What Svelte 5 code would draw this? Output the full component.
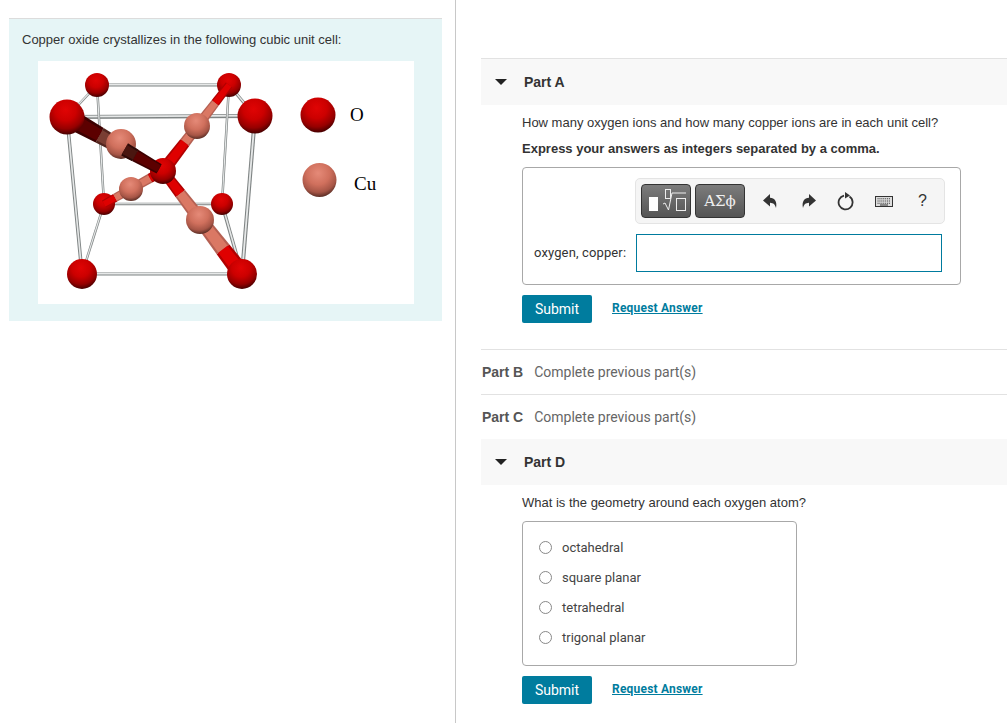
<script>
  const radioOptions = ['octahedral', 'square planar', 'tetrahedral', 'trigonal planar'];
  const struts = [
    [97,85,229,85,3],[67,117,255,116,4],[104,204,222,204,2.5],[82,274,242,274,3],
    [97,85,104,204,2.5],[229,85,222,204,2.5],[67,117,82,274,3.5],[255,116,242,274,4],
    [97,85,67,117,2.5],[229,85,255,116,3],[104,204,82,274,2.5],[222,204,242,274,3.5]
  ];

  // Part of a tapered bond between two atoms, from fraction a to fraction b, scaled across by k.
  function seg(bond, a, b, k = 1) {
    const [x1, y1, w1, x2, y2, w2] = bond;
    const dx = x2 - x1, dy = y2 - y1, len = Math.hypot(dx, dy);
    const nx = -dy / len, ny = dx / len;
    const at = (t, s) => {
      const w = (w1 + (w2 - w1) * t) * k / 2;
      return (x1 + dx * t + nx * w * s).toFixed(1) + ',' + (y1 + dy * t + ny * w * s).toFixed(1);
    };
    return [at(a, 1), at(b, 1), at(b, -1), at(a, -1)].join(' ');
  }
  const upperRight = [229,85,8, 163,171,13];
  const lowerLeft = [104,204,8, 163,171,10];
  const frontLeft = [67,117,20, 163,171,10];
  const lowerRight = [163,171,10, 242,274,18];
  const bright = { edge: '#b00000', core: '#df0000' };
  const copper = { edge: '#b56052', core: '#da7864' };
  const darkRed = { edge: '#3c0000', core: '#5c0000' };
  const darkCu = { edge: '#52251e', core: '#7a3e33' };
  const darkMix = { edge: '#2e0a08', core: '#4a1610' };
  const layerOne = [
    [upperRight, 0, .21, bright], [upperRight, .21, .67, copper], [upperRight, .67, 1, bright],
    [lowerLeft, 0, .19, bright], [lowerLeft, .19, .78, copper], [lowerLeft, .78, 1, bright]
  ];
  const layerDark = [
    [frontLeft, 0, .34, darkRed], [frontLeft, .34, .6, darkCu], [frontLeft, .6, .71, darkMix], [frontLeft, .71, .96, darkRed]
  ];
  const layerFront = [
    [lowerRight, 0, .22, bright], [lowerRight, .22, .76, copper], [lowerRight, .76, 1, bright]
  ];
</script>

{#snippet bonds(list)}
  {#each list as [bond, a, b, c]}
    <polygon points={seg(bond, a, b)} fill={c.edge}/>
    <polygon points={seg(bond, a, b, .72)} fill={c.core}/>
  {/each}
{/snippet}

<div class="page">
  <aside class="left">
    <div class="intro">
      <p>Copper oxide crystallizes in the following cubic unit cell:</p>
      <div class="figure">
        <svg width="376" height="243" viewBox="38 61 376 243">
          <defs>
            <radialGradient id="red" cx="46%" cy="30%" r="75%">
              <stop offset="0" stop-color="#e00404"/><stop offset=".4" stop-color="#cc0000"/><stop offset=".72" stop-color="#960000"/><stop offset="1" stop-color="#2e0000"/>
            </radialGradient>
            <radialGradient id="cu" cx="46%" cy="30%" r="75%">
              <stop offset="0" stop-color="#e58a78"/><stop offset=".45" stop-color="#d0705d"/><stop offset=".75" stop-color="#a65546"/><stop offset="1" stop-color="#40201a"/>
            </radialGradient>
          </defs>
          {#each struts as s}
            <line x1={s[0]} y1={s[1]} x2={s[2]} y2={s[3]} stroke="#7f8484" stroke-width={s[4]}/>
            <line x1={s[0]} y1={s[1] - s[4] * 0.1} x2={s[2]} y2={s[3] - s[4] * 0.1} stroke="#e6e8e8" stroke-width={s[4] * 0.45}/>
          {/each}

          <circle cx="104" cy="204" r="11" fill="url(#red)"/>
          <circle cx="222" cy="204" r="11" fill="url(#red)"/>
          <circle cx="97" cy="85" r="12" fill="url(#red)"/>
          <circle cx="229" cy="85" r="12" fill="url(#red)"/>
          {@render bonds(layerOne)}
          <circle cx="197" cy="126" r="13" fill="url(#cu)"/>
          <circle cx="131" cy="189" r="12" fill="url(#cu)"/>
          {@render bonds(layerFront)}
          <circle cx="163" cy="171" r="13" fill="url(#red)"/>
          {@render bonds(layerDark)}
          <circle cx="121" cy="144" r="15" fill="url(#cu)"/>
          <polygon points={seg(frontLeft, .6, .71)} fill="#2e0a08"/>
          <polygon points={seg(frontLeft, .6, .71, .72)} fill="#4a1610"/>
          <circle cx="200" cy="220" r="14" fill="url(#cu)"/>
          <circle cx="67" cy="117" r="17.5" fill="url(#red)"/>
          <circle cx="255" cy="116" r="17.5" fill="url(#red)"/>
          <circle cx="82" cy="274" r="15" fill="url(#red)"/>
          <circle cx="242" cy="274" r="15" fill="url(#red)"/>
          <circle cx="318" cy="115" r="17.5" fill="url(#red)"/>
          <circle cx="319.500" cy="180" r="17" fill="url(#cu)"/>
          <text x="350" y="121" class="sym">O</text>
          <text x="354" y="190" class="sym">Cu</text>
        </svg>
      </div>
    </div>
  </aside>

  <main class="right">
    <section class="part">
      <header class="part-head">
        <svg class="caret" width="12" height="6" viewBox="0 0 12 6"><path d="M0 0H12L6 6Z"/></svg>
        <span>Part A</span>
      </header>
      <div class="part-body">
        <p class="q">How many oxygen ions and how many copper ions are in each unit cell?</p>
        <p class="q strong">Express your answers as integers separated by a comma.</p>
        <div class="answer">
          <div class="toolbar">
            <button class="tool-dark templates" aria-label="Templates">
              <svg width="46" height="28" viewBox="0 0 46 28">
                <rect x="6" y="10" width="9" height="14" fill="#fff"/>
                <rect x="22.500" y="2.500" width="5" height="9" fill="none" stroke="#eee" stroke-width="1"/>
                <path d="M20 17l2 -1l3.500 7l3.500 -17h14" fill="none" stroke="#eee" stroke-width="1"/>
                <rect x="33.500" y="11.500" width="9" height="12" fill="none" stroke="#eee" stroke-width="1"/>
              </svg>
            </button>
            <button class="tool-dark symbols">ΑΣϕ</button>
            <svg class="ic undo" width="16" height="16" viewBox="0 0 16 16"><path d="M1 7.500L8 1V4.800C12.500 5 15.500 8.500 14 15C13 11.500 11.500 10 8 9.800V13.500Z"/></svg>
            <svg class="ic redo" width="16" height="16" viewBox="0 0 16 16"><path d="M15 7.500L8 1V4.800C3.500 5 .5 8.500 2 15C3 11.500 4.500 10 8 9.800V13.500Z"/></svg>
            <svg class="ic reset" width="18" height="20" viewBox="0 0 18 20"><path d="M7 4.600A7 7 0 1 0 12.500 5.600" fill="none" stroke="#333" stroke-width="1.800"/><path d="M8 1L13 4.600L8 7.500Z" fill="#333"/></svg>
            <svg class="ic kbd" width="18" height="11" viewBox="0 0 18 11"><rect x=".5" y=".5" width="17" height="10" fill="#ddd" stroke="#333"/><path d="M2.500 2.800h13M2.500 5h13M2.500 7.200h13" stroke="#444" stroke-width="1.100" stroke-dasharray="1.100 .8"/><path d="M5 9h8" stroke="#333"/></svg>
            <span class="help">?</span>
          </div>
          <div class="input-row">
            <label for="ans">oxygen, copper:</label>
            <input id="ans" type="text" />
          </div>
        </div>
        <div class="actions">
          <button class="submit">Submit</button>
          <span class="request">Request Answer</span>
        </div>
      </div>
    </section>

    <div class="locked first"><b>Part B</b><span>Complete previous part(s)</span></div>
    <div class="locked"><b>Part C</b><span>Complete previous part(s)</span></div>

    <section class="part d">
      <header class="part-head">
        <svg class="caret" width="12" height="6" viewBox="0 0 12 6"><path d="M0 0H12L6 6Z"/></svg>
        <span>Part D</span>
      </header>
      <div class="part-body">
        <p class="q">What is the geometry around each oxygen atom?</p>
        <div class="options">
          {#each radioOptions as o}
            <div class="opt"><span class="radio"></span><span>{o}</span></div>
          {/each}
        </div>
        <div class="actions second">
          <button class="submit">Submit</button>
          <span class="request">Request Answer</span>
        </div>
      </div>
    </section>
  </main>
</div>

<style>
  :global(body) { margin: 0; background: #fff; }
  .page { display: flex; width: 1007px; height: 723px; overflow: hidden; font-family: "Liberation Sans", Arial, sans-serif; color: #333; font-size: 13px; }
  p { margin: 0; }
  .left { width: 456px; box-sizing: border-box; border-right: 1px solid #c8c8c8; padding: 18px 13px 0 9px; flex: none; }
  .intro { background: #e6f5f6; border-top: 1px solid #dcdcdc; height: 302px; }
  .intro p { padding: 14px 0 0 13px; line-height: 14px; }
  .figure { margin: 14px 0 0 29px; width: 376px; height: 243px; background: #fff; }
  .figure svg { display: block; }
  .sym { font-family: "Liberation Serif", serif; font-size: 19px; fill: #000; }

  .right { flex: 1; min-width: 0; padding: 58px 0 0 25px; }
  .part-head { display: flex; align-items: center; height: 46px; background: #f8f8f8; border-top: 1px solid #e2e2e2; font-weight: 700; font-size: 14px; color: #333; }
  .caret { margin: 0 0 0 14px; fill: #222; }
  .part-head span { margin-left: 17px; }
  .part.d .part-head { border-top: 0; height: 46px; }
  .part-body { padding: 0 0 0 41px; }
  .q { font-size: 13px; line-height: 16px; padding-top: 10px; color: #333; }
  .q.strong { font-weight: 700; }
  .answer { margin-top: 10px; width: 437px; height: 116px; border: 1px solid #a8a8a8; border-radius: 4px; position: relative; }
  .toolbar { display: flex; align-items: center; box-sizing: border-box; position: absolute; left: 112px; top: 10px; width: 310px; height: 46px; padding-left: 5px; background: #f5f5f5; border: 1px solid #e4e4e4; border-radius: 5px; }
  .tool-dark { height: 34px; padding: 0; border: 1px solid #333; border-radius: 4px; background: linear-gradient(#7c7c7c, #555); color: #eee; display: flex; align-items: center; justify-content: center; }
  .templates { width: 50px; }
  .symbols { width: 50px; margin-left: 4px; font-family: "DejaVu Serif", "Liberation Serif", serif; font-size: 15px; }
  .ic { flex: none; fill: #333; }
  .undo { margin-left: 17px; }
  .redo { margin-left: 23px; }
  .reset { margin-left: 20px; }
  .kbd { margin-left: 20px; }
  .help { margin-left: 25px; font-size: 16px; color: #333; }
  .input-row { position: absolute; left: 11px; top: 66px; display: flex; align-items: center; }
  .input-row label { font-family: Roboto, sans-serif; font-size: 13px; letter-spacing: .13px; width: 102px; margin-top: -2px; }
  input { box-sizing: border-box; width: 306px; height: 38px; border: 1px solid #007b9e; background: #fff; padding: 0; margin: 0; outline: 0; }
  .actions { display: flex; align-items: center; margin-top: 10px; }
  .submit { width: 70px; height: 28px; padding: 0; border: 0; border-radius: 2px; background: #007c9e; color: #fff; font-family: Roboto, sans-serif; font-size: 14px; }
  .request { margin: -2px 0 0 20px; color: #007c9e; font-family: Roboto, sans-serif; font-weight: 700; font-size: 12px; letter-spacing: .2px; text-decoration: underline; }
  .locked { display: flex; align-items: center; height: 44px; border-top: 1px solid #e2e2e2; font-size: 14px; }
  .locked.first { margin-top: 26px; }
  .locked b { color: #555; margin-left: 1px; }
  .locked span { margin-left: 11px; color: #666; font-family: Roboto, sans-serif; font-size: 14px; }
  .options { margin-top: 10px; box-sizing: border-box; width: 275px; height: 145px; border: 1px solid #a8a8a8; border-radius: 4px; padding: 10px 0 0 16px; }
  .opt { display: flex; align-items: center; height: 30px; font-family: Roboto, sans-serif; font-size: 13px; color: #444; }
  .radio { box-sizing: border-box; width: 13px; height: 13px; border: 1px solid #888; border-radius: 50%; margin-right: 10px; background: #fff; }
</style>
